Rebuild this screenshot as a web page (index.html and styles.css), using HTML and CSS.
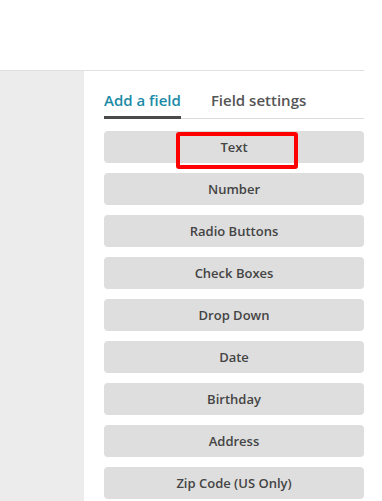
FILE: index.html
```html
<!DOCTYPE html>
<html lang="en">
<head>
    <meta charset="UTF-8">
    <meta name="viewport" content="width=device-width, initial-scale=1.0">
    <title>Form Builder</title>
    <link rel="stylesheet" href="styles.css">
</head>
<body>
    <header class="topbar"></header>

    <div class="main">
        <aside class="sidebar"></aside>

        <section class="panel">
            <div class="tabs">
                <a class="tab active" href="#">Add a field</a>
                <a class="tab" href="#">Field settings</a>
            </div>

            <div class="fields">
                <div class="field-wrap">
                    <button class="field">Text</button>
                    <div class="highlight"></div>
                </div>
                <button class="field">Number</button>
                <button class="field">Radio Buttons</button>
                <button class="field">Check Boxes</button>
                <button class="field">Drop Down</button>
                <button class="field">Date</button>
                <button class="field">Birthday</button>
                <button class="field">Address</button>
                <button class="field">Zip Code (US Only)</button>
            </div>
        </section>
    </div>
</body>
</html>
```

FILE: styles.css
```css
body {
    margin: 0;
    font-family: "Open Sans", Arial, sans-serif;
    background-color: #fff;
    overflow: hidden;
}

.topbar {
    height: 70px;
    width: 364px;
    border-bottom: 1px solid #e0e0e0;
}

.main {
    display: flex;
    height: 430px;
}

.sidebar {
    width: 84px;
    background-color: #ececec;
}

.panel {
    width: 260px;
    padding-left: 20px;
}

.tabs {
    display: flex;
    gap: 30px;
    margin-top: 18px;
    border-bottom: 1px solid #dcdcdc;
}

.tab {
    font-size: 15px;
    font-weight: 600;
    color: #555;
    text-decoration: none;
    padding-bottom: 5px;
    line-height: 22px;
    margin-bottom: -1px;
    border-bottom: 3px solid transparent;
}

.tab.active {
    color: #1b8aa6;
    border-bottom-color: #4a4a4a;
}

.fields {
    display: flex;
    flex-direction: column;
    gap: 10px;
    margin-top: 12px;
}

.field-wrap {
    position: relative;
}

.field {
    display: block;
    width: 100%;
    height: 32px;
    border: none;
    border-radius: 4px;
    background-color: #dedede;
    color: #444;
    font-family: "Open Sans", Arial, sans-serif;
    font-size: 13px;
    font-weight: 600;
    cursor: pointer;
}

.highlight {
    position: absolute;
    left: 72px;
    top: 1px;
    width: 122px;
    height: 37px;
    box-sizing: border-box;
    border: 4px solid #f00;
    border-radius: 3px;
}
```
